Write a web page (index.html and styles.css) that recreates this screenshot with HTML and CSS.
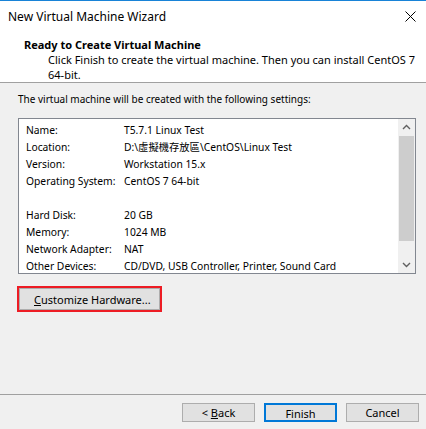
FILE: index.html
```html
<!DOCTYPE html>
<html>
<head>
<meta charset="utf-8">
<link rel="stylesheet" href="styles.css">
</head>
<body>
<div class="window">
  <div class="titlebar">
    <span class="title">New Virtual Machine Wizard</span>
    <svg class="close" width="11" height="11" viewBox="0 0 11 11"><path d="M0.5 0.5 L10.5 10.5 M10.5 0.5 L0.5 10.5" stroke="#000" stroke-width="1" fill="none"/></svg>
  </div>
  <div class="header">
    <div class="h-title">Ready to Create Virtual Machine</div>
    <div class="h-desc">Click Finish to create the virtual machine. Then you can install CentOS 7<br>64-bit.</div>
  </div>
  <div class="content">
    <div class="intro">The virtual machine will be created with the following settings:</div>
    <div class="listbox">
      <div class="rows">
        <div class="row"><span class="k">Name:</span><span class="v">T5.7.1 Linux Test</span></div>
        <div class="row"><span class="k">Location:</span><span class="v">D:\虛擬機存放區\CentOS\Linux Test</span></div>
        <div class="row"><span class="k">Version:</span><span class="v">Workstation 15.x</span></div>
        <div class="row"><span class="k">Operating System:</span><span class="v">CentOS 7 64-bit</span></div>
        <div class="row"><span class="k"></span><span class="v"></span></div>
        <div class="row"><span class="k">Hard Disk:</span><span class="v">20 GB</span></div>
        <div class="row"><span class="k">Memory:</span><span class="v">1024 MB</span></div>
        <div class="row"><span class="k">Network Adapter:</span><span class="v">NAT</span></div>
        <div class="row"><span class="k">Other Devices:</span><span class="v">CD/DVD, USB Controller, Printer, Sound Card</span></div>
      </div>
      <div class="scrollbar">
        <svg class="arrow" width="17" height="17" viewBox="0 0 17 17"><path d="M5 10 L8.5 6.5 L12 10" stroke="#606060" stroke-width="1.4" fill="none"/></svg>
        <div class="track"><div class="thumb"></div></div>
        <svg class="arrow" width="17" height="17" viewBox="0 0 17 17"><path d="M5 7 L8.5 10.5 L12 7" stroke="#606060" stroke-width="1.4" fill="none"/></svg>
      </div>
    </div>
    <div class="custom-wrap">
      <button class="btn custom"><u>C</u>ustomize Hardware...</button>
    </div>
  </div>
  <div class="footer">
    <button class="btn">&lt; <u>B</u>ack</button>
    <button class="btn primary">Finish</button>
    <button class="btn">Cancel</button>
  </div>
</div>
</body>
</html>
```

FILE: styles.css
```css
* { box-sizing: border-box; }
html, body { margin: 0; padding: 0; }
body {
  width: 426px;
  height: 429px;
  background: #f0f0f0;
  font-family: "Noto Sans", "Noto Sans CJK TC", sans-serif;
  font-size: 11px;
  color: #000;
  overflow: hidden;
}
.window {
  width: 426px;
  height: 429px;
  display: flex;
  flex-direction: column;
  border-top: 1px solid #1883d7;
}
.titlebar {
  height: 30px;
  background: #fff;
  display: flex;
  align-items: center;
  justify-content: space-between;
  padding: 0 10px 0 8px;
}
.title {
  font-size: 12px;
  color: #000;
}
.close { display: block; }
.header {
  background: #fff;
  height: 52px;
  padding: 7px 0 0 24px;
  border-bottom: 1px solid #a0a0a0;
}
.h-title {
  font-weight: bold;
  line-height: 14px;
}
.h-desc {
  padding-left: 24px;
  line-height: 15px;
}
.content {
  flex: 1;
  padding: 9px 10px 0 18px;
  border-bottom: 1px solid #a0a0a0;
}
.intro {
  font-size: 10px;
  line-height: 14px;
}
.listbox {
  margin-top: 12px;
  height: 156px;
  border: 1px solid #828790;
  background: #fff;
  display: flex;
  font-size: 10.3px;
}
.rows {
  flex: 1;
  padding: 2px 0 0 7px;
}
.row {
  display: flex;
  height: 17px;
  align-items: center;
  white-space: nowrap;
}
.k { width: 98px; flex: none; }
.scrollbar {
  width: 17px;
  display: flex;
  flex-direction: column;
  background: #f0f0f0;
}
.arrow { display: block; flex: none; }
.track {
  flex: 1;
  display: flex;
  flex-direction: column;
}
.thumb {
  height: 105px;
  margin: 0 1px;
  background: #cdcdcd;
}
.custom-wrap {
  margin-top: 12px;
  width: 145px;
  height: 26px;
  border: 2px solid #ed1c24;
  margin-left: -1px;
}
.btn {
  font-family: inherit;
  font-size: 11px;
  color: #000;
  background: #e1e1e1;
  border: 1px solid #adadad;
  padding: 0;
  margin: 0;
  height: 19px;
  width: 73px;
  line-height: 17px;
}
.btn.custom {
  width: 100%;
  height: 100%;
  text-align: left;
  padding-left: 14px;
}
.btn.primary {
  border: 2px solid #0078d7;
}
.footer {
  height: 34px;
  display: flex;
  justify-content: flex-end;
  align-items: flex-start;
  padding: 8px 7px 0 0;
  gap: 9px;
}
```
